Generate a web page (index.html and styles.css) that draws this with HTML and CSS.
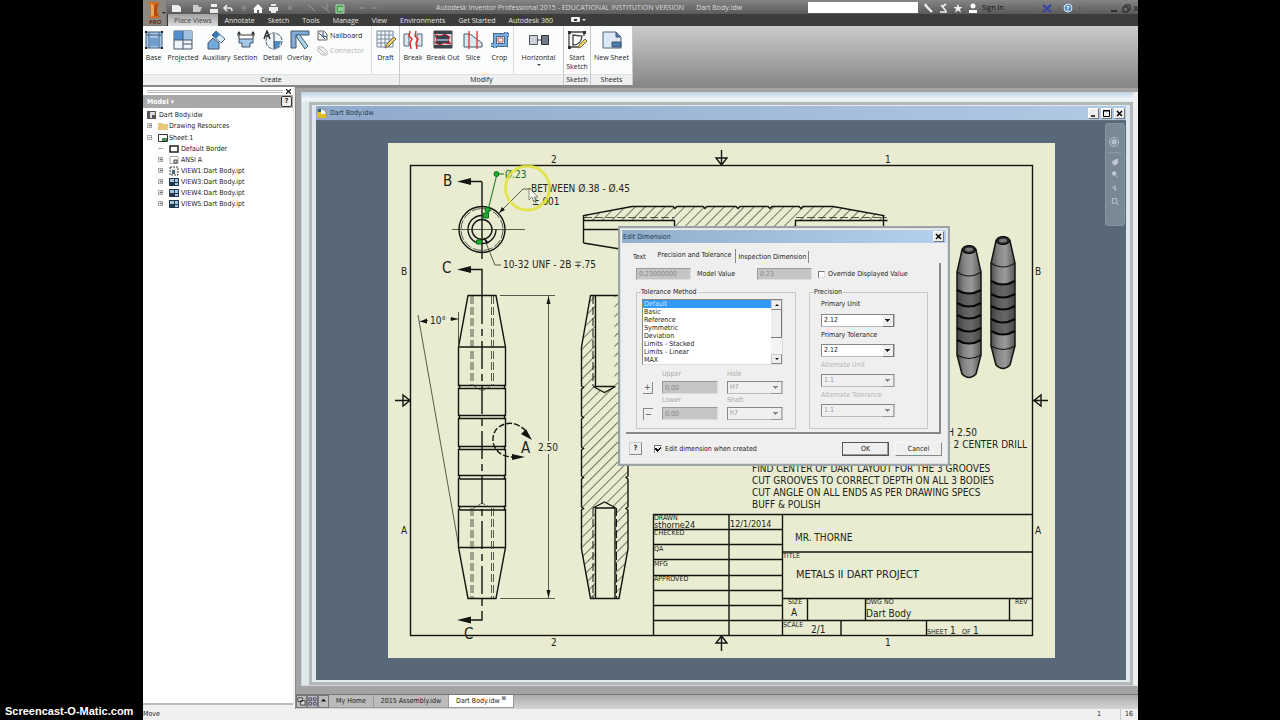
FILE: index.html
```html
<!DOCTYPE html>
<html lang="en">
<head>
<meta charset="utf-8">
<title>Autodesk Inventor Professional 2015 - Dart Body.idw</title>
<link rel="stylesheet" href="styles.css">
</head>
<body>
<aside class="watermark">Screencast-O-Matic.com</aside>
<div class="app">
  <header class="top">
    <button class="app-button" aria-label="Application menu">
      <svg width="24" height="26" viewBox="0 0 24 26"><rect width="24" height="26" fill="#777"/><rect x="0" y="0" width="23" height="25" fill="#8d8781"/><path d="M5 2h11l-2 4 1 8 2 4H6l2-5-1-7z" fill="#d2691e"/><path d="M8 3l3 3v9l-3 2z" fill="#f3a55a"/><path d="M11 6l5-3-2 5v5l2 4-5-2z" fill="#b4490f"/><text x="6" y="24" font-size="6" font-weight="bold" fill="#5b2a10">PRO</text><path d="M19 12h4l-2 2z" fill="#222"/></svg>
    </button>
    <div class="top-rows">
      <div class="titlebar">
        <div class="quick">
          <svg width="220" height="13" viewBox="168 0 220 13" fill="none" stroke="#e8e8e8">
            <path d="M173 4h6l3 2v5h-9z" fill="#eee" stroke="none"/><path d="M186 7h2M237 7h1M300 7h1" stroke="#555"/>
            <path d="M194 4h5l1 2h3l-2 5h-7z" fill="#ccc" stroke="none"/>
            <path d="M212 3h6v3h-6zM211 8h8v4h-8z" fill="#eee" stroke="none"/>
            <path d="M226 7h5q2 0 2 3M228 4l-3 3 3 3" stroke-width="1.6"/>
            <path d="M247 7h-5M244 4l3 3-3 3" stroke="#999"/>
            <path d="M254 8l5-5 5 5h-1v4h-3V9h-2v3h-3V8z" fill="#fff" stroke="none"/>
            <path d="M270 6h9v4h-9z" fill="#eee" stroke="none"/><path d="M272 4h5M272 11h5" stroke-width="2"/>
            <path d="M289 5l4 4M293 5l-4 4M309 4l7 6M323 5l7 6M328 3v5M360 7h6M373 7h5" stroke="#999"/>
            <path d="M337 4h8v8h-8z" fill="#3f9b48" stroke="#b8e0b8"/><path d="M339 7h5M339 9h5" stroke="#e8ffe8"/>
          </svg>
        </div>
        <span class="title-text">Autodesk Inventor Professional 2015 - EDUCATIONAL INSTITUTION VERSION</span>
        <span class="title-text doc">Dart Body.idw</span>
        <span class="title-space"></span>
        <input class="search" type="text" aria-label="Search help">
        <svg class="info" width="58" height="13" viewBox="920 0 58 13" fill="none" stroke="#eee">
          <path d="M923 3l2 3 5 5" stroke-width="2.4"/><path d="M939 4l5 6M944 3l-4 3M938 11h7" stroke-width="1.6"/>
          <path d="M956 3l1.3 3h3.2l-2.5 2 1 3.5-3-2-3 2 1-3.500-2.500-2h3.200z" fill="#eee" stroke="none"/><circle cx="971" cy="5" r="2.500" fill="#fff" stroke="none"/><path d="M967 12v-3h8v3z" fill="#fff" stroke="none"/>
        </svg>
        <button class="signin">Sign In</button>
        <svg class="winbtns" width="104" height="13" viewBox="1034 0 104 13" fill="none">
          <path d="M1034 7h1M1079 7h2" stroke="#444"/><path d="M1043 4l4 3.500-4 3.500M1051 4l-4 3.500 4 3.500" stroke="#3443a4" stroke-width="2"/>
          <circle cx="1068" cy="7" r="4" fill="#4c88bd" stroke="#dce9f5"/><text x="1066" y="10" fill="#fff" font-size="7" font-weight="bold">?</text>
          <path d="M1111 10h6" stroke="#222" stroke-width="1.500"/><path d="M1123 6h5v5h-5zM1125 6V4h5v5h-2M1134 5l4 5M1138 5l-4 5" stroke="#222"/>
        </svg>
      </div>
      <nav class="tabs">
        <button class="on">Place Views</button><button>Annotate</button><button>Sketch</button><button>Tools</button><button>Manage</button><button>View</button><button>Environments</button><button>Get Started</button><button>Autodesk 360</button>
        <button class="display" aria-label="Ribbon display"><svg width="16" height="8"><rect x="1" y="1" width="9" height="5" rx="1" fill="#eee"/><rect x="4" y="3" width="3" height="2" fill="#333"/><path d="M12 3h4l-2 2z" fill="#eee"/></svg></button>
      </nav>
    </div>
  </header>

  <section class="ribbon">
    <div class="panel create">
      <div class="tools">
        <button class="tool"><svg viewBox="0 0 20 20"><path d="M2 2v16h16V2zM5 2v16M15 2v16M2 5h16" fill="#a9c4e2" stroke="#3f6183"/><path d="M6 8h8v8H6z" fill="#6e9fd2"/><path d="M1 1h2v2H1zM17 1h2v2h-2zM1 17h2v2H1zM17 17h2v2h-2z" fill="#222"/></svg>Base</button>
        <button class="tool"><svg viewBox="0 0 20 20"><path d="M1 1h18v18H1z" fill="#edf4fa" stroke="#456"/><path d="M1 1h9v9H1z" fill="#4f8fcf"/><path d="M10 1h9v9h-9z" fill="#9fc0e0"/><path d="M10 1v18M1 10h18M10 14h9" stroke="#456"/></svg>Projected</button>
        <button class="tool"><svg viewBox="0 0 20 20"><path d="M9 1l9 8-4 4-9-8z" fill="#d8ecf8" stroke="#467"/><path d="M9 1l4 3.500-4 4-4-3.500z" fill="#3c78b6"/><path d="M1 13l5-5 6 5v6H1z" fill="#76a9dc" stroke="#456"/></svg>Auxiliary</button>
        <button class="tool"><svg viewBox="0 0 20 20"><path d="M1 5h18M3 2v7M17 2v7" stroke="#333" fill="none"/><path d="M1 4l2-3 2 3M15 4l2-3 2 3" fill="#333"/><path d="M3 9h14v4h-3v4H6v-4H3z" fill="#a5c7e8" stroke="#456"/></svg>Section</button>
        <button class="tool"><svg viewBox="0 0 20 20"><circle cx="11" cy="11" r="8" fill="#eef5fb" stroke="#456" stroke-dasharray="4 1"/><path d="M11 11h7q-1 7-7 8z" fill="#4e8bc7"/><path d="M11 4v14" stroke="#345"/><path d="M1 9l3-8 3 8M2 6h4" fill="none" stroke="#222" stroke-width="1.400"/></svg>Detail</button>
        <button class="tool"><svg viewBox="0 0 20 20"><path d="M1 1h18v4H6v13H1z" fill="#80add7" stroke="#456"/><path d="M6 6l3-2 9 12-3 3z" fill="#a8d4ea" stroke="#456"/></svg>Overlay</button>
        <div class="small-tools">
          <button><svg viewBox="0 0 11 11"><path d="M1 1h6l3 3v6H1z" fill="#eee" stroke="#666"/><path d="M2 3l6 6M6 2v4l4 1" stroke="#357" fill="none"/></svg>Nailboard</button>
          <button class="off" disabled><svg viewBox="0 0 11 11"><path d="M1 2h5l4 4v4H5L1 6z" fill="#eee" stroke="#bbb"/><path d="M2 3l6 6" stroke="#bbb"/></svg>Connector</button>
        </div>
        <button class="tool sep"><svg viewBox="0 0 20 20"><path d="M1 1h16v16H1zM1 5h16M1 9h16M1 13h16M5 1v16M9 1v16M13 1v16" fill="#f5f8fa" stroke="#789"/><path d="M9 18l2-4 7-7 2 2-7 7z" fill="#f2d35b" stroke="#765"/></svg>Draft</button>
      </div>
      <h2>Create</h2>
    </div>
    <div class="panel modify">
      <div class="tools">
        <button class="tool"><svg viewBox="0 0 20 20"><path d="M1 4h5v12H1zM14 4h5v12h-5z" fill="#dce6ee" stroke="#567"/><path d="M7 1l-1 5 3 3-2 4 1 6M13 1l-1 5 3 3-2 4 1 6" fill="none" stroke="#d33" stroke-width="1.500"/></svg>Break</button>
        <button class="tool"><svg viewBox="0 0 20 20"><path d="M1 1h18v17H1z" fill="#cfd8de" stroke="#444"/><path d="M2 5l5 1 5-2 5 3-2 3 3 4-7-1-4 2-5-2 2-3z" fill="#34424c" stroke="#d23"/><path d="M1 1h18v3H1zM1 15h18v3H1z" fill="#3b444b"/><path d="M4 9h11v2H4z" fill="#8ba0b2"/></svg>Break Out</button>
        <button class="tool"><svg viewBox="0 0 20 20"><path d="M1 4h6l12 9v4H1z" fill="#dbe8f2" stroke="#456"/><path d="M6 1v18M14 1v18" stroke="#d44" stroke-width="1.500"/></svg>Slice</button>
        <button class="tool"><svg viewBox="0 0 20 20"><path d="M1 15h15V2M5 18V5h14" fill="none" stroke="#357" stroke-width="4"/><path d="M1 15h15V2M5 18V5h14" fill="none" stroke="#79ade0" stroke-width="2.500"/><path d="M8 8h5v4H8z" fill="#fff" stroke="#d44"/></svg>Crop</button>
        <button class="tool sep"><svg viewBox="0 0 20 20"><path d="M.5 5.500h8v9h-8z" fill="#ccd3d8" stroke="#555"/><path d="M12.500 5.500h7v9h-7z" fill="#6f7c87" stroke="#333"/><path d="M8 10h4" stroke="#333"/></svg>Horizontal<i class="caret"></i></button>
      </div>
      <h2>Modify</h2>
    </div>
    <div class="panel">
      <div class="tools">
        <button class="tool"><svg viewBox="0 0 20 20"><path d="M2 2h15v4M2 2v15h9M6 5v10q8 0 9-9L6 5z" fill="none" stroke="#444" stroke-width="1.300"/><path d="M1 1h3v3H1zM16 1h3v3h-3zM1 16h3v3H1z" fill="#333"/><path d="M11 18l1-3 6-6 2 2-6 6z" fill="#f2d35b" stroke="#765"/></svg>Start<br>Sketch</button>
      </div>
      <h2>Sketch</h2>
    </div>
    <div class="panel sheets">
      <div class="tools">
        <button class="tool"><svg viewBox="0 0 20 20"><path d="M1 2h13l5 5v11H1z" fill="#dce9f5" stroke="#567"/><path d="M14 2v5h5M10 12h9v5h-9z" fill="#4a7cb2" stroke="#456"/></svg>New Sheet</button>
      </div>
      <h2>Sheets</h2>
    </div>
  </section>

  <main class="work">
    <aside class="browser">
      <div class="grip"><i></i><button aria-label="Close"><svg width="5" height="5" viewBox="0 0 5 5"><path d="M0 0l5 5M5 0L0 5" stroke="#222" stroke-width="1.300"/></svg></button></div>
      <div class="model"><button class="model-menu">Model ▾</button><button class="help" aria-label="Help">?</button></div>
      <ul class="tree">
        <li><span class="row"><svg viewBox="0 0 10 10"><path d="M0 1h9v8H0z" fill="#555"/><path d="M3 2h5v3H5v3H3z" fill="#ddd"/></svg>Dart Body.idw</span></li>
        <li class="lv1"><span class="row"><i class="tw">+</i><svg viewBox="0 0 10 10"><path d="M0 2h4l1 1h5v6H0z" fill="#e9c77b"/></svg>Drawing Resources</span></li>
        <li class="lv1"><span class="row"><i class="tw">−</i><svg viewBox="0 0 10 10"><path d="M.5 1.500h9v7h-9z" fill="#fff" stroke="#333"/><path d="M4 5h5v3H4z" fill="#4a8a52"/></svg>Sheet:1</span>
          <ul class="views">
            <li><span class="row"><i class="tw none"></i><svg viewBox="0 0 10 10"><path d="M1 2h8v6H1z" fill="#fff" stroke="#222" stroke-width="1.500"/></svg>Default Border</span></li>
            <li><span class="row"><i class="tw">+</i><svg viewBox="0 0 10 10"><path d="M1 1.500h8v7H1z" fill="#fff" stroke="#aaa"/><path d="M5 5h3v3H5z" fill="#ddd" stroke="#444"/></svg>ANSI A</span></li>
            <li><span class="row"><i class="tw">+</i><svg viewBox="0 0 10 10"><path d="M1 1h8v8H1z" fill="#eee" stroke="#444" stroke-dasharray="2 1"/><path d="M3 4h3v4H3z" fill="#467"/></svg>VIEW1:Dart Body.ipt</span></li>
            <li><span class="row"><i class="tw">+</i><svg viewBox="0 0 10 10"><path d="M0 1h10v8H0z" fill="#24384d"/><path d="M1 2h4v3H1zM6 2h3v3H6zM6 6h3v2H6z" fill="#a7c6e2"/></svg>VIEW3:Dart Body.ipt</span></li>
            <li><span class="row"><i class="tw">+</i><svg viewBox="0 0 10 10"><path d="M0 1h10v8H0z" fill="#24384d"/><path d="M1 2h4v3H1zM6 2h3v3H6zM6 6h3v2H6z" fill="#a7c6e2"/></svg>VIEW4:Dart Body.ipt</span></li>
            <li><span class="row"><i class="tw">+</i><svg viewBox="0 0 10 10"><path d="M0 1h10v8H0z" fill="#24384d"/><path d="M1 2h4v3H1zM6 2h3v3H6zM6 6h3v2H6z" fill="#a7c6e2"/></svg>VIEW5:Dart Body.ipt</span></li>
          </ul>
        </li>
      </ul>
    </aside>

    <div class="mdi">
      <div class="back-window">
        <div class="window">
          <div class="window-title"><svg width="10" height="10" viewBox="0 0 10 10"><path d="M1 1h5l3 3v5H1z" fill="#f4f4ea" stroke="#888"/><path d="M0 4h4v6H0zM4 6h5v4H4z" fill="#e0be25"/><path d="M1 1h3v3H1z" fill="#367"/></svg><span>Dart Body.idw</span>
            <div class="window-buttons"><button aria-label="Minimize"><svg viewBox="0 0 9 9"><path d="M2 7h4" stroke="#000" stroke-width="1.500"/></svg></button><button aria-label="Maximize"><svg viewBox="0 0 9 9"><path d="M1.500 1.500h6v6h-6z" fill="none" stroke="#000"/><path d="M1 2h7" stroke="#000"/></svg></button><button aria-label="Close"><svg viewBox="0 0 9 9"><path d="M2 2l5 5M7 2L2 7" stroke="#000" stroke-width="1.500"/></svg></button></div>
          </div>
          <div class="canvas">
            <svg class="sheet" viewBox="388 143 667 515">
              <defs>
                <pattern id="hatch" width="7" height="7" patternUnits="userSpaceOnUse" patternTransform="rotate(45)"><path d="M.5 0v7" stroke="#55574a" stroke-width=".8"/></pattern>
                <linearGradient id="metal"><stop offset="0" stop-color="#4c4c4c"/><stop offset=".3" stop-color="#858585"/><stop offset=".6" stop-color="#9a9a9a"/><stop offset="1" stop-color="#585858"/></linearGradient>
                <g id="dart">
                  <path d="M962 250L957 272V355L962 374Q969 381 976 374L981 355V272L976 250z" fill="url(#metal)" stroke="#151515" stroke-width="1.500"/>
                  <path d="M957.500 290q11.500 6 23 0v50q-11.500 6-23 0z" fill="#333" opacity=".5"/>
                  <path d="M957 272q12 8 24 0M957 355q12 7 24 0" fill="none" stroke="#151515" stroke-width="1.200"/>
                  <path d="M957 290q12 7 24 0M957 303q12 7 24 0M957 315q12 7 24 0M957 328q12 7 24 0M957 340q12 7 24 0" fill="none" stroke="#080808" stroke-width="2.200"/>
                  <ellipse cx="969" cy="249.500" rx="7" ry="4" fill="#222" stroke="#000"/><ellipse cx="969" cy="249.500" rx="4" ry="2" fill="#777"/>
                </g>
              </defs>
              <rect x="388" y="143" width="667" height="515" fill="#e9ecd1"/>
              <g class="ln">
                <rect x="410.500" y="165.500" width="622" height="470"/>
                <path d="M721.500 150v15M716 158h11l-5.500 7zM721.500 651v-15M716 643h11l-5.500-7zM395 400.500h15M403 395v11l7-5.500zM1048 400.500h-15M1041 395v11l-7-5.500z"/>
                <path d="M653.500 635V514.500H1032.500M729 514v121M782.500 514v121M653 529.500h129M653 544.500h129M653 559.500h129M653 575.500h129M653 590.500h129M653 605.500h129M653 620.500h379M782 552h250M782 598.500h250M807.500 598v22M865.500 598v22M1009.500 598v22M841 620v15M926.500 620v15"/>
              </g>
              <g class="z"><text x="551" y="163">2</text><text x="885" y="163">1</text><text x="551" y="646">2</text><text x="885" y="646">1</text><text x="401" y="275">B</text><text x="401" y="534">A</text><text x="1035" y="275">B</text><text x="1035" y="534">A</text></g>

              <g class="ln">
                <circle cx="482" cy="229.500" r="23"/><circle cx="482" cy="229.500" r="14" stroke-dasharray="66 22"/><circle cx="482" cy="229.500" r="10"/>
                <path d="M482 182v77M482 181.500h-18M482 296v-26.500h-18"/>
                <path d="M482 296v324h-18" stroke-dasharray="28 5 7 5"/>
                <path d="M468 295.500h28l9.500 51.500v38.500h-1v3h1v27h-1v3h1v28h-1v3h1v26h-1v3h1v28h-1v3h1v38l-9.500 51H468l-9.500-51v-38h1v-3h-1v-28h1v-3h-1v-26h1v-3h-1v-28h1v-3h-1v-27h1v-3h-1V347z"/>
                <path d="M459 347h46M459 385.500h46M460 388.500h45M459 415.500h46M460 418.500h45M459 446.500h46M460 449.500h45M459 475.500h46M460 479h45M459 506.500h46M460 510h45M459 547.500h46"/>
              </g>
              <g class="thin"><circle cx="482" cy="229.500" r="21" stroke-dasharray="9 2"/><path d="M452 229.500h73"/><path d="M471 296v90M473 296v90M491.500 296v90M493.500 296v90M471 508v90M473 508v90M491.500 508v90M493.500 508v90" stroke-dasharray="8 3"/><path d="M474 386l8 5 9-5M474 508l8-5 9 5" stroke-dasharray="3 2"/>
                <path d="M418 315l40.500 230M458.500 312v36M420 321.500l8-1M450 319h9M500 295.500h55M500 598.500h55M548.500 296v145M548.500 454v144M531 189h-8l-24 24M501 265h-6l-11-27"/></g>
              <path d="M457 181.500l14-3.500v7zM457 269.500l14-3.500v7zM457 620l14-3.500v7zM548.500 296l-2 8h4zM548.500 598l-2-8h4zM499 213l3-6 3 3zM484 237l5 6-3 1zM420 321.500l7-3v5zM458 319l-7-2v4zM532 440l-11-6 5-5zM525 457l-13-3v6z" fill="#15150f"/>
              <path d="M526 431Q516 421 505 424Q492 428 493 442Q496 456 512 457" class="ln" stroke-dasharray="6 2"/>

              <path d="M590.500 295.500h5v91l9 6 10-6v-91h5L628 347v202l-9 49.500h-4V508l-10-6-10 6v90.500h-5L581.500 549V347z" fill="url(#hatch)"/>
              <g class="ln"><path d="M590.500 295.500h28l9.500 51.500v39l-2 1.500 2 1.500v27l-2 1.500 2 1.500v28l-2 1.500 2 1.500v26l-2 1.500 2 1.500v28l-2 1.500 2 1.500v39l-9 49.500h-28.500L581.500 549v-39l2-1.500-2-1.500v-28l2-1.500-2-1.500v-26l2-1.500-2-1.500v-28l2-1.500-2-1.500v-27l2-1.500-2-1.500v-39zM595.500 296v90.500h19.500M593 386.500l11.500 6 11-6M595.500 598v-90h19.500v90M593 508l11.500-6 11.500 6"/><path d="M593 296v90M593 508v90M616.500 508v90" stroke-width="1" stroke-dasharray="8 3"/></g>

              <path d="M583.500 215.500l48.500-9h205l50.500 9v5h-92v8h-121v-8h-91z" fill="url(#hatch)"/>
              <path class="ln" d="M583.500 243v-27.500l48.500-9h41l2 2 2-2h26l2 2 2-2h29l2 2 2-2h28l2 2 2-2h27l2 2 2-2h30l50.500 9V226M583.500 220.500h91v8M795.500 228v-7.500h92M583.500 229.500H620M583.500 243l36.500 6"/>
              <path class="thin" d="M584 217.500h90M796 217.500h91" stroke-dasharray="8 3"/>

              <g class="n">
                <text x="531" y="192">BETWEEN Ø.38 - Ø.45</text><text x="532" y="205">±.001</text><text x="503" y="268">10-32 UNF - 2B ∓.75</text><text x="430" y="324">10°</text><text x="538" y="451">2.50</text>
                <text class="end" x="977" y="436">DEPTH 2.50</text><text class="end" x="1027" y="448"># 2 CENTER DRILL</text>
                <text x="752" y="472">FIND CENTER OF DART LAYOUT FOR THE 3 GROOVES</text><text x="752" y="484">CUT GROOVES TO CORRECT DEPTH ON ALL 3 BODIES</text><text x="752" y="496">CUT ANGLE ON ALL ENDS AS PER DRAWING SPECS</text><text x="752" y="508">BUFF &amp; POLISH</text>
                <text x="795" y="541">MR. THORNE</text><text x="791" y="616">A</text><text x="866" y="617">Dart Body</text><text x="811" y="633">2/1</text><text x="950" y="634">1</text><text x="973" y="634">1</text>
              </g>
              <text class="t" x="796" y="578">METALS II DART PROJECT</text>
              <g class="m"><text x="654" y="528">sthorne24</text><text x="730" y="527">12/1/2014</text></g>
              <g class="s"><text x="654" y="520">DRAWN</text><text x="654" y="535">CHECKED</text><text x="654" y="551">QA</text><text x="654" y="566">MFG</text><text x="654" y="581">APPROVED</text><text x="783" y="558">TITLE</text><text x="788" y="604">SIZE</text><text x="866" y="604">DWG NO</text><text x="1015" y="604">REV</text><text x="783" y="627">SCALE</text><text x="927" y="634">SHEET</text><text x="962" y="634">OF</text></g>
              <g class="b"><text x="443" y="186">B</text><text x="442" y="273">C</text><text x="464" y="639">C</text><text x="521" y="453">A</text></g>
              <use href="#dart"/><use href="#dart" transform="translate(34 -9)"/>

              <g fill="#1fae32" stroke="#08741a"><path d="M497 174l-9 36M497 174h7" fill="none"/><circle cx="496.500" cy="174" r="2.500"/><circle cx="487.500" cy="210" r="2.500"/><path d="M483.500 213h5v5h-5zM476.500 240h5v4h-5z"/></g>
              <text x="505" y="178" class="green">Ø.23</text>
              <circle cx="527.500" cy="188" r="22" fill="none" stroke="#e1e23b" stroke-width="3" opacity=".85"/>
              <path d="M529 188v12l3-3 2 5 2-1-2-4h4z" fill="#fff" stroke="#555" stroke-width=".8" opacity=".8"/>
            </svg>

            <div class="navbar"><svg viewBox="0 0 20 103" fill="none" stroke="#c2cbd1"><circle cx="9" cy="20" r="5"/><circle cx="9" cy="20" r="2.500" fill="#aebac2"/><path d="M3 32h14M15 4l2-2M14 99h3" stroke="#94a3ad"/><path d="M8 41l5-2v4l-3 3-3-3z" fill="#c2cbd1"/><circle cx="9" cy="55" r="2" fill="#c2cbd1"/><path d="M11 57l2 2M7 70l5 3M10 68v6M7 83h5v5H7zM12 88l2 2"/></svg></div>

            <section class="dialog" role="dialog" aria-label="Edit Dimension">
              <div class="dialog-title"><span>Edit Dimension</span><button aria-label="Close"><svg viewBox="0 0 9 9"><path d="M2 2l5 5M7 2L2 7" stroke="#000" stroke-width="1.500"/></svg></button></div>
              <div class="dialog-tabs"><button>Text</button><button class="on">Precision and Tolerance</button><button>Inspection Dimension</button></div>
              <div class="page">
                <div class="values"><input id="mv" value="0.23000000" disabled><label for="mv">Model Value</label><input aria-label="Displayed value" value="0.23" disabled><label class="check"><input type="checkbox">Override Displayed Value</label></div>
                <div class="groups">
                  <fieldset class="method"><legend>Tolerance Method</legend>
                    <div class="listbox"><select size="8" aria-label="Tolerance Method"><option selected>Default</option><option>Basic</option><option>Reference</option><option>Symmetric</option><option>Deviation</option><option>Limits - Stacked</option><option>Limits - Linear</option><option>MAX</option></select><div class="scroll"><i class="up"></i><b></b><i class="down"></i></div></div>
                    <div class="fits">
                      <label class="c2" for="up">Upper</label><label for="hole">Hole</label>
                      <button class="plus" disabled>+</button><input id="up" value="0.00" disabled><span class="combo"><select id="hole" disabled><option>H7</option></select></span>
                      <label class="c2" for="lo">Lower</label><label for="shaft">Shaft</label>
                      <button class="minus" disabled>−</button><input id="lo" value="0.00" disabled><span class="combo"><select id="shaft" disabled><option>h7</option></select></span>
                    </div>
                  </fieldset>
                  <fieldset class="precision"><legend>Precision</legend>
                    <label for="pu">Primary Unit</label><span class="combo"><select id="pu"><option>2.12</option></select></span>
                    <label for="pt">Primary Tolerance</label><span class="combo"><select id="pt"><option>2.12</option></select></span>
                    <label class="off" for="au">Alternate Unit</label><span class="combo dim"><select id="au" disabled><option>1.1</option></select></span>
                    <label class="off" for="at">Alternate Tolerance</label><span class="combo dim"><select id="at" disabled><option>1.1</option></select></span>
                  </fieldset>
                </div>
              </div>
              <div class="dialog-foot"><button class="help" aria-label="Help">?</button><label class="check"><input type="checkbox" checked>Edit dimension when created</label><button class="ok">OK</button><button class="cancel">Cancel</button></div>
            </section>
          </div>
        </div>
      </div>
      <nav class="doc-tabs"><button class="ic" aria-label="Cascade"><svg viewBox="0 0 10 10"><path d="M1 1h5v4H1zM4 4h5v5H4z" fill="#ddd" stroke="#333"/></svg></button><button class="ic" aria-label="Tile"><svg viewBox="0 0 10 10"><path d="M1 1h3v3H1zM6 1h3v3H6zM1 6h3v3H1zM6 6h3v3H6z" fill="none" stroke="#446"/></svg></button><button class="ic" aria-label="Show list"><svg viewBox="0 0 10 10"><path d="M2 5h6L5 2z" fill="#111"/></svg></button><button>My Home</button><button>2015 Assembly.idw</button><button class="on">Dart Body.idw <sup>⊠</sup></button></nav>
    </div>
  </main>
  <footer class="status"><span>Move</span><span class="n1">1</span><span class="n2">16</span></footer>
</div>
</body>
</html>
```
FILE: styles.css
```css
* { box-sizing: border-box; }
body { margin: 0; background: #000; height: 100vh; display: grid; grid-template-columns: 143px minmax(0, 1fr) 142px; grid-template-rows: minmax(0, 1fr); font-family: "DejaVu Sans Condensed", "Noto Sans", sans-serif; font-size: 7px; color: #222; overflow: hidden; }
button, input, select { font: inherit; color: inherit; margin: 0; padding: 0; border: 0; border-radius: 0; background: none; }
.watermark { align-self: end; padding: 0 0 1px 5px; color: #fff; font: bold 11px/16px "Liberation Sans", sans-serif; white-space: nowrap; }
.app { display: flex; flex-direction: column; min-width: 0; min-height: 0; background: #f0f0f0; }
.top, .ribbon { font-family: "Open Sans", sans-serif; flex: none; }

.top { display: flex; background: #3c3c3a; height: 26px; }
.app-button { width: 24px; height: 26px; }
.app-button svg { display: block; }
.top-rows { flex: 1; min-width: 0; }
.titlebar { height: 14px; display: flex; align-items: center; background: linear-gradient(#858585, #5a5a5a); color: #ddd; white-space: nowrap; }
.titlebar svg { display: block; }
.quick { width: 269px; }
.title-text.doc { margin-left: 12px; }
.title-space { flex: 1; }
.search { width: 110px; height: 11px; background: #fff; margin-right: 4px; }
.signin { width: 54px; text-align: left; color: #111; padding-left: 2px; }
.tabs { height: 12px; display: flex; align-items: stretch; color: #e4e4e4; gap: 1px; }
.tabs button { padding: 0 6px; line-height: 11px; }
.tabs .on { background: linear-gradient(#a2a2a2, #dcdcdc); color: #444; margin-left: 1px; }
.tabs .display { padding-left: 10px; display: flex; align-items: center; }

.ribbon { display: flex; height: 61px; padding-bottom: 2px; background: linear-gradient(#cbcbcb, #868686); }
.panel { background: #fbfcfc; border-right: 1px solid #c5c7c8; display: flex; flex-direction: column; width: 27px; }
.create { width: 257px; }
.modify { width: 164px; }
.sheets { width: 42px; }
.panel h2 { margin: 0; height: 11px; font-size: 7px; font-weight: normal; line-height: 10px; text-align: center; background: #eeefef; border-top: 1px solid #dfe0e0; }
.tools { flex: 1; display: grid; grid-template-columns: 1fr; }
.create .tools { grid-template-columns: 21px 38px 29px 29px 25px 29px 57px 28px; }
.modify .tools { grid-template-columns: 26px 34px 26px 27px 50px; }
.tool { display: flex; flex-direction: column; align-items: center; padding-top: 4px; line-height: 9px; white-space: nowrap; min-width: 0; overflow: visible; }
.tool svg { width: 20px; height: 20px; flex: none; margin-bottom: 3px; }
.tool.sep { border-left: 1px solid #d9dbdb; }
.caret { border: 2px solid transparent; border-top-color: #444; margin-top: 2px; }
.small-tools { display: flex; flex-direction: column; gap: 4px; padding: 4px 0 0 3px; }
.small-tools button { display: flex; align-items: center; gap: 2px; height: 11px; }
.small-tools svg { width: 11px; height: 11px; }
.off { color: #b5b5b5; }

.work { flex: 1; display: flex; min-height: 0; background: #f0f0f0; }
.browser { width: 150px; background: #fff; border-bottom: 2px solid #bbb; margin-bottom: 4px; }
.grip { height: 8px; display: flex; align-items: center; gap: 3px; padding: 0 2px 0 4px; }
.grip i { flex: 1; height: 3px; border: solid #b9b9b9; border-width: 1px 0; }
.grip button, .grip svg { display: block; }
.model { height: 13px; background: #a8a8a8; display: flex; justify-content: space-between; align-items: center; padding: 0 1px 0 4px; }
.model-menu { color: #fff; font-weight: bold; }
.help { width: 11px; height: 11px; border: 1px solid #333; border-radius: 2px; background: #eee; font-weight: bold; font-size: 7px; line-height: 9px; color: #222; }
.tree, .tree ul { list-style: none; margin: 0; padding: 0; }
.tree { padding: 1px 0 0 4px; }
.row { display: flex; align-items: center; height: 11px; gap: 1px; white-space: nowrap; }
.row svg { width: 10px; height: 10px; flex: none; margin-right: 1px; }
.lv1 { margin-bottom: 1px; }
.lv1 > .row .tw { margin-right: 5px; }
.lv1 > .row svg { margin-right: 0; }
.tw { width: 5px; height: 5px; border: 1px solid #aaa; font-size: 5px; line-height: 3px; font-style: normal; text-align: center; flex: none; }
.tw.none { border-width: 0 0 1px; height: 1px; }
.tree .views { padding-left: 11px; }
.views .row .tw { margin-right: 5px; }

.mdi { flex: 1; min-width: 0; margin-left: 2px; border: solid #8a8a8a; border-width: 1px 0 0 1px; background: #a3a3a3; display: flex; flex-direction: column; }
.back-window { flex: 1; min-height: 0; margin: 4px 0 8px 5px; border: 1px solid #ccd5dd; border-right: 5px solid #f0f0f0; background: linear-gradient(#c4d5e6, #f1f7fb 6px, #dfe8e8 11px); padding: 9px 0 0 7px; display: flex; }
.window { flex: 1; min-width: 0; border: solid #b4b8b6; border-width: 3px; box-shadow: inset 0 0 0 2px #e0e9f0; padding: 1px 4px 2px 4px; display: flex; flex-direction: column; }
.window-title { height: 15px; flex: none; display: flex; align-items: center; gap: 3px; padding: 0 1px; background: linear-gradient(90deg, #90aacb, #b2c9e5); border-bottom: 1px solid #61717c; color: #24374a; }
.window-buttons { margin-left: auto; display: flex; gap: 2px; }
.window-buttons button, .dialog-title button { width: 11px; height: 11px; background: #eee; border: 1px solid #fff; border-right-color: #777; border-bottom-color: #777; }
.window-buttons svg, .dialog-title svg { display: block; width: 9px; height: 9px; }
.canvas { flex: 1; min-height: 0; position: relative; background: #586879; padding: 22px 71px 22px 72px; }
.sheet { display: block; width: 100%; height: auto; }
.sheet text { fill: #22231b; }
.ln { fill: none; stroke: #15150f; stroke-width: 1.4; }
.thin { fill: none; stroke: #33342b; stroke-width: .8; }
.n, .z, .green { font-size: 10px; }
.end { text-anchor: end; }
.t { font-size: 11px; }
.m { font-size: 9px; }
.s { font-size: 7px; }
.b { font-size: 15px; }
.sheet .green { fill: #176a20; }
.navbar { position: absolute; top: 2px; right: 1px; width: 20px; height: 103px; background: #788895; border: 1px solid #8696a0; border-radius: 3px; }
.navbar svg { display: block; width: 18px; }

.dialog { position: absolute; left: 302px; top: 105px; width: 332px; border: 2px solid #9da4a8; box-shadow: inset 0 0 0 1px #d9dfe3; background: #efefef; padding: 2px; color: #222; }
.dialog-title { height: 13px; display: flex; align-items: center; justify-content: space-between; padding: 0 2px 0 1px; background: linear-gradient(90deg, #91aecb, #b5d0ec); color: #22364d; }
.dialog-tabs { display: flex; align-items: flex-end; padding: 6px 0 0 5px; height: 20px; }
.dialog-tabs button { height: 12px; padding: 0 2px; border-right: 1px solid #888; white-space: nowrap; }
.dialog-tabs button:first-child { border-right: 0; padding: 0 6px; }
.dialog-tabs .on { height: 14px; padding: 0 4px 2px 6px; }
.page { margin: 0 5px 0 4px; border: solid #888; border-width: 0 2px 2px 0; padding: 5px 11px 6px 10px; height: 171px; }
.values { display: flex; align-items: center; height: 12px; }
.values input:disabled { width: 55px; height: 12px; margin-right: 6px; }
.values > label[for] { width: 60px; }
input:disabled { background: #c5c5c5; border: 1px solid #999; border-right-color: #ddd; border-bottom-color: #ddd; color: #888; padding: 0 2px; }
.check { display: flex; align-items: center; gap: 3px; white-space: nowrap; }
.check input { appearance: none; width: 7px; height: 7px; background: #fff; border: 1px solid #777; border-right-color: #ddd; border-bottom-color: #ddd; }
.dialog-foot .check input { width: 8px; height: 8px; }
.check input:checked { background: linear-gradient(135deg, transparent 42%, #111 42% 64%, transparent 64%) 2px 0 / 4px 6px no-repeat, linear-gradient(45deg, transparent 30%, #111 30% 70%, transparent 70%) 0 2px / 3px 3px no-repeat, #fff; }
.groups { display: grid; grid-template-columns: 160fr 119fr; gap: 13px; margin-top: 8px; }
fieldset { margin: 0; border: 1px solid #c9c9c9; padding: 3px 12px 7px 5px; min-width: 0; height: 141px; }
legend { padding: 0 1px 0 0; margin-left: -1px; line-height: 8px; }
.precision { padding: 3px 32px 0 11px; }
.precision legend { margin-left: -7px; }
.listbox { display: flex; height: 66px; border: 1px solid #888; border-color: #888 #ddd #ddd #888; background: #fff; }
.listbox select { appearance: none; flex: 1; height: 64px; overflow: hidden; outline: 0; }
.listbox option { height: 8px; min-height: 8px; line-height: 8px; padding: 0 1px; color: #222; }
.listbox option:checked { background: linear-gradient(#3399f5, #3399f5); color: #cbe5ff; }
.scroll { width: 11px; display: flex; flex-direction: column; background: #f4f4f4; }
.scroll i { height: 10px; border: 1px solid #ccc; border-right-color: #888; border-bottom-color: #888; background: #eee; display: grid; place-items: center; }
.scroll b { height: 28px; border-right: 1px solid #777; border-bottom: 1px solid #777; background: #eee; }
.scroll .down { margin-top: auto; }
.scroll i::after { content: ""; border: 2px solid transparent; }
.scroll .up::after { border-bottom-color: #111; border-top: 0; }
.scroll .down::after { border-top-color: #111; border-bottom: 0; }
.fits { display: grid; grid-template-columns: 10px 56px 56px; column-gap: 9px; row-gap: 1px; margin: 4px 0 0 0; color: #aaa; align-items: center; justify-content: end; }
.fits label { line-height: 11px; }
.c2 { grid-column: 2; }
.fits input { width: 56px; height: 13px; }
.fits button { width: 10px; height: 12px; color: #555; border: 1px solid #888; line-height: 8px; font-size: 9px; }
.fits .plus { border-width: 0 1px 1px 0; }
.fits .minus { border-width: 1px 0 0 1px; }
.combo { position: relative; display: block; height: 13px; border: 1px solid #888; border-right-color: #bbb; border-bottom-color: #bbb; }
.combo select { appearance: none; display: block; width: 100%; height: 11px; padding: 0 2px; background: #fff; line-height: 11px; opacity: 1; }
.combo select:disabled { background: #f0f0f0; color: #999; }
.combo::after { content: ""; position: absolute; right: 0; top: 0; width: 10px; height: 11px; pointer-events: none; border-right: 1px solid #777; border-bottom: 1px solid #777; background: linear-gradient(#222, #222) 2px 4px / 5px 1px no-repeat, linear-gradient(#222, #222) 3px 5px / 3px 1px no-repeat, linear-gradient(#222, #222) 4px 6px / 1px 1px no-repeat, #eee; }
.fits .combo::after, .dim::after { opacity: .5; }
.precision label { display: block; line-height: 10px; margin: 0 -24px 5px 0; }
.precision .combo + label { margin: 3px -24px 4px 0; }
.dialog-foot { display: flex; align-items: center; padding: 4px 4px 3px 7px; height: 28px; }
.dialog-foot .help { width: 13px; height: 13px; margin-right: 12px; border-radius: 0; border-color: #ccc #888 #888 #ccc; }
.dialog-foot .ok { margin-left: auto; width: 47px; height: 14px; border: 1px solid #555; box-shadow: inset -1px -1px #999; margin-right: 6px; }
.cancel { width: 47px; height: 14px; border: 1px solid #f8f8f8; border-right-color: #888; border-bottom-color: #888; }

.doc-tabs { display: flex; flex: none; height: 15px; border-top: 1px solid #777; background: linear-gradient(#aaa, #d5d5d5); align-items: stretch; padding-bottom: 1px; }
.doc-tabs button { padding: 0 7px; background: #bbb; border: 1px solid #999; border-width: 0 1px 1px 0; }
.doc-tabs .ic { width: 11px; padding: 0; border: 1px solid #777; }
.doc-tabs .ic svg { display: block; width: 9px; height: 9px; }
.doc-tabs .on { background: #fff; }
.doc-tabs sup { font-size: 6px; line-height: 1px; }
.status { height: 11px; flex: none; display: flex; align-items: center; background: #f0f0f0; line-height: 11px; }
.status .n1 { margin-left: auto; width: 23px; }
.status .n2 { width: 18px; border-left: 1px solid #ccc; padding-left: 4px; }
```
